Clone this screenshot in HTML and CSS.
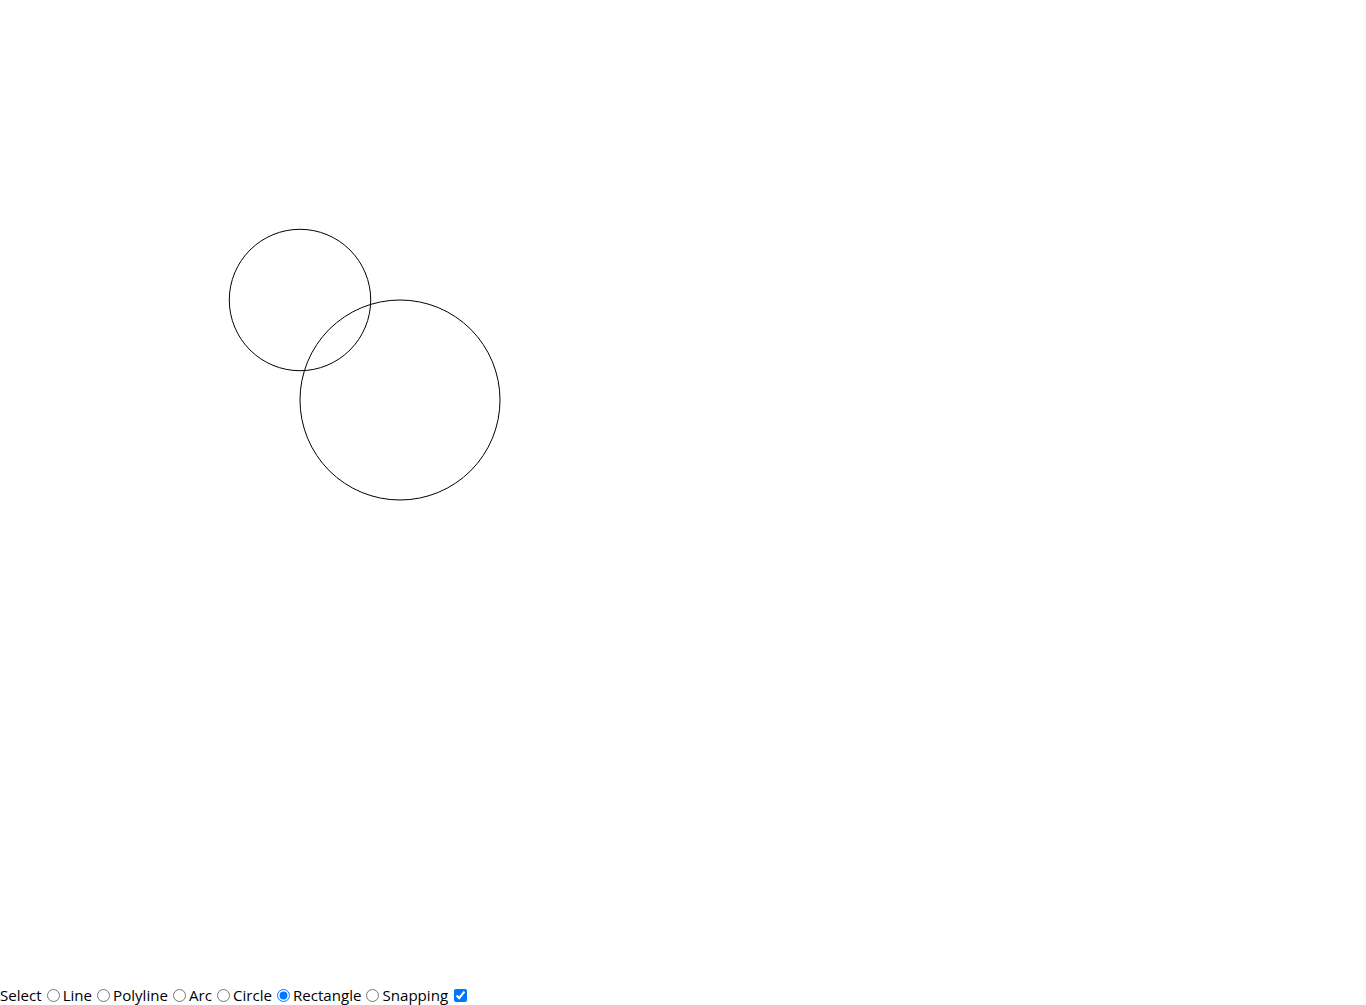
FILE: index.html
```html
<!DOCTYPE html>
<html>
<head>
<meta charset="utf-8">
<link rel="stylesheet" href="styles.css">
</head>
<body>
<svg class="canvas" width="1366" height="985" viewBox="0 0 1366 985">
  <circle cx="300" cy="300" r="70.71" fill="none" stroke="#000" stroke-width="1"/>
  <circle cx="400" cy="400" r="100" fill="none" stroke="#000" stroke-width="1"/>
</svg>
<div class="toolbar">Select<input type="radio" name="mode">Line<input type="radio" name="mode">Polyline<input type="radio" name="mode">Arc<input type="radio" name="mode">Circle<input type="radio" name="mode" checked>Rectangle<input type="radio" name="mode">Snapping<input class="snap" type="checkbox" checked></div>
</body>
</html>
```
FILE: styles.css
```css
html, body {
  margin: 0;
  padding: 0;
  background: #fff;
}
.canvas {
  display: block;
}
.toolbar {
  font-family: "Open Sans", "Noto Sans", sans-serif;
  font-size: 15.1px;
  line-height: 20px;
  color: #000;
  white-space: nowrap;
}
.toolbar input {
  vertical-align: -1px;
}
.toolbar .snap {
  margin-left: 6px;
}
```
